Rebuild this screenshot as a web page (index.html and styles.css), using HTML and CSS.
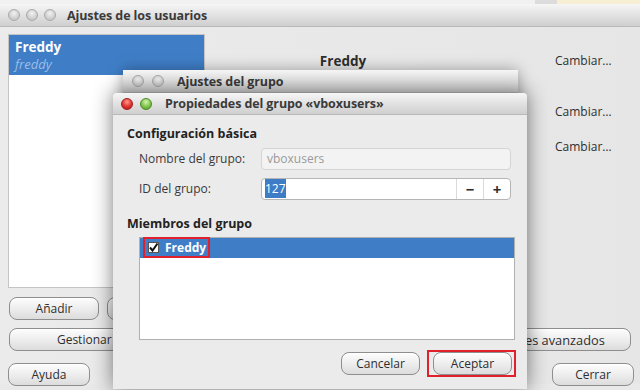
FILE: index.html
```html
<!DOCTYPE html>
<html lang="es">
<head>
  <meta charset="UTF-8">
  <title>Ajustes de los usuarios</title>
  <link rel="stylesheet" href="styles.css">
</head>
<body>
<div class="desktop-strip"><span class="strip-gap"></span><span class="strip-note"></span></div>

<div class="window main-window">
  <div class="titlebar">
    <span class="lights"><i class="light"></i><i class="light"></i><i class="light"></i></span>
    <span class="title">Ajustes de los usuarios</span>
  </div>
  <div class="main-body">
    <div class="top-area">
      <ul class="user-list">
        <li class="selected"><b>Freddy</b><i>freddy</i></li>
      </ul>
      <div class="user-details">
        <span class="detail-name">Freddy</span><span class="change">Cambiar…</span>
        <span class="detail-label row2">Tipo de cuenta:</span><span class="change row2">Cambiar…</span>
        <span class="detail-label row3">Contraseña:</span><span class="change row3">Cambiar…</span>
      </div>
    </div>
    <div class="btn-row">
      <button class="btn btn-wide">Añadir</button>
      <button class="btn btn-wide">Eliminar</button>
    </div>
    <div class="btn-row spread">
      <button class="btn btn-manage">Gestionar grupos…</button>
      <button class="btn btn-adv">Ajustes avanzados</button>
    </div>
    <div class="btn-row spread last">
      <button class="btn btn-small">Ayuda</button>
      <button class="btn btn-small">Cerrar</button>
    </div>
  </div>
</div>

<div class="window group-settings">
  <div class="titlebar">
    <span class="lights"><i class="light"></i><i class="light"></i></span>
    <span class="title">Ajustes del grupo</span>
  </div>
  <div class="dialog-body"></div>
</div>

<div class="window group-props">
  <div class="titlebar">
    <span class="lights"><i class="light red"></i><i class="light green"></i></span>
    <span class="title">Propiedades del grupo «vboxusers»</span>
  </div>
  <div class="props-body">
    <h3>Configuración básica</h3>
    <div class="form-grid">
      <label>Nombre del grupo:</label>
      <div class="field disabled">vboxusers</div>
      <label>ID del grupo:</label>
      <div class="field spin">
        <span class="spin-value"><span class="sel">127</span></span>
        <span class="spin-btn">−</span>
        <span class="spin-btn">+</span>
      </div>
    </div>
    <h3 class="members-title">Miembros del grupo</h3>
    <div class="member-list">
      <div class="member selected">
        <span class="mark">
          <svg class="check" width="11" height="11" viewBox="0 0 11 11">
            <rect x="0.5" y="0.5" width="10" height="10" fill="#fff" stroke="#555"/>
            <path d="M2 5.5 L4.5 8.5 L9.5 1.5" fill="none" stroke="#111" stroke-width="2"/>
          </svg>
          Freddy
        </span>
      </div>
    </div>
    <div class="dialog-buttons">
      <button class="btn btn-dlg">Cancelar</button>
      <span class="mark-btn"><button class="btn btn-dlg">Aceptar</button></span>
    </div>
  </div>
</div>
</body>
</html>
```

FILE: styles.css
```css
body { margin: 0; width: 640px; height: 390px; overflow: hidden; position: relative; font-family: "Open Sans", "DejaVu Sans", sans-serif; font-size: 12px; color: #2e2e2e; background: #e9e9e9; }

.desktop-strip { height: 4px; background: #f1f1f1; display: flex; justify-content: flex-end; }
.strip-gap { width: 22px; background: #dcdcdc; }
.strip-note { width: 83px; background: #f7efd3; }

.window { background: #ebebeb; }
.titlebar { display: flex; align-items: center; height: 22px; background: linear-gradient(#f6f6f6, #dedede 60%, #cfcfcf); border-bottom: 1px solid #b9b9b9; }
.titlebar .title { font-weight: bold; font-size: 12.5px; color: #3a3a3a; letter-spacing: -0.1px; }
.lights { display: flex; gap: 6px; }
.light { display: block; width: 10px; height: 10px; border-radius: 50%; border: 1px solid #a9a9a9; background: radial-gradient(circle at 50% 35%, #f2f2f2, #c9c9c9 70%); }
.light.red { border-color: #9c1f1f; background: radial-gradient(circle at 50% 30%, #ff9a8f, #e0302d 55%, #b21818); }
.light.green { border-color: #4a8a2a; background: radial-gradient(circle at 50% 30%, #d6f5b0, #7dc447 55%, #4f9a2a); }

/* ventana principal */
.main-window .titlebar { padding-left: 8px; }
.main-window .lights { gap: 6px; margin-right: 11px; }
.main-body { padding: 7px 7px 0 8px; background: linear-gradient(90deg, #ebebeb, #e6e6e6); height: 357px; box-sizing: border-box; }
.top-area { display: flex; height: 254px; }
.user-list { list-style: none; margin: 0; padding: 0; width: 197px; background: #fff; border: 1px solid #c4c4c4; box-sizing: border-box; }
.user-list li { display: flex; flex-direction: column; padding: 3px 6px 0; height: 40px; box-sizing: border-box; }
.user-list li.selected { background: #3f7ec7; color: #fff; }
.user-list b { font-size: 13.5px; line-height: 18px; }
.user-list i { font-size: 13px; line-height: 16px; color: #9dbde6; }

.user-details { display: grid; grid-template-columns: 276px auto; column-gap: 74px; align-content: start; padding-top: 18px; }
.detail-name { text-align: center; font-weight: bold; font-size: 13.5px; line-height: 18px; }
.detail-label { text-align: right; line-height: 16px; }
.change { line-height: 18px; }
.row2 { margin-top: 33px; }
.row3 { margin-top: 17px; }

.btn-row { display: flex; gap: 8px; margin-top: 9px; padding-left: 1px; }
.btn-row.spread { justify-content: space-between; margin-top: 8px; }
.btn-row.last { margin-top: 12px; padding-left: 0; }
.btn { font-family: inherit; font-size: 12px; color: #2e2e2e; height: 23px; padding: 0; border: 1px solid #8e8e8e; border-radius: 8px; background: linear-gradient(#fdfdfd, #ececec 55%, #dcdcdc); box-shadow: inset 0 1px 0 #fff; }
.btn-wide { width: 90px; }
.btn-manage { width: 202px; }
.btn-adv { width: 162px; margin-right: 2px; font-size: 12.8px; }
.btn-small { width: 82px; }
.btn-row.last .btn-small:last-child { margin-right: -1px; }

/* dialogos */
.group-settings { position: absolute; left: 123px; top: 70px; width: 395px; height: 300px; box-shadow: 0 0 14px rgba(0,0,0,0.35); }
.group-settings .titlebar { height: 22px; padding-left: 9px; }
.group-settings .lights { gap: 8px; margin-right: 13px; }

.group-props { position: absolute; left: 113px; top: 93px; width: 414px; height: 296px; box-shadow: 0 0 20px 1px rgba(0,0,0,0.45); border-radius: 4px 4px 0 0; }
.group-props .titlebar { height: 21px; padding-left: 8px; border-radius: 4px 4px 0 0; }
.group-props .lights { gap: 7px; margin-right: 13px; }
.props-body { padding: 11px 14px 0 14px; }
.props-body h3 { margin: 0; font-size: 12.5px; line-height: 16px; font-weight: bold; color: #222; }
.form-grid { display: grid; grid-template-columns: 122px 250px; row-gap: 8px; margin: 6px 0 0 12px; }
.form-grid label { line-height: 22px; color: #3a3a3a; }
.field { height: 22px; box-sizing: border-box; border: 1px solid #c2c2c2; border-radius: 4px; background: #fff; line-height: 20px; padding-left: 5px; }
.field.disabled { background: #f3f3f3; border-color: #d4d4d4; color: #9a9a9a; }
.field.spin { display: flex; padding-left: 3px; border-color: #b5b5b5; }
.spin-value { flex: 1; }
.sel { background: #3e7cc6; color: #fff; padding: 1px 0; }
.spin-btn { width: 26px; text-align: center; border-left: 1px solid #dadada; font-weight: bold; font-size: 15px; }
.members-title { margin-top: 16px !important; }
.member-list { margin: 5px -2px 0 12px; height: 103px; box-sizing: border-box; background: #fff; border: 1px solid #b0b0b0; }
.member { height: 20px; display: flex; align-items: center; padding-left: 3px; }
.member.selected { background: #3f7ec7; color: #fff; font-weight: bold; }
.mark { display: flex; align-items: center; gap: 6px; height: 21px; box-sizing: border-box; margin-top: -1px; border: 2px solid #e0202a; padding: 0 2px 0 3px; }
.dialog-buttons { display: flex; justify-content: flex-end; align-items: center; gap: 7px; margin-top: 10px; }
.btn-dlg { width: 79px; }
.mark-btn { display: flex; border: 2px solid #e0202a; padding: 0 2px 0 4px; margin-right: -3px; }
```
